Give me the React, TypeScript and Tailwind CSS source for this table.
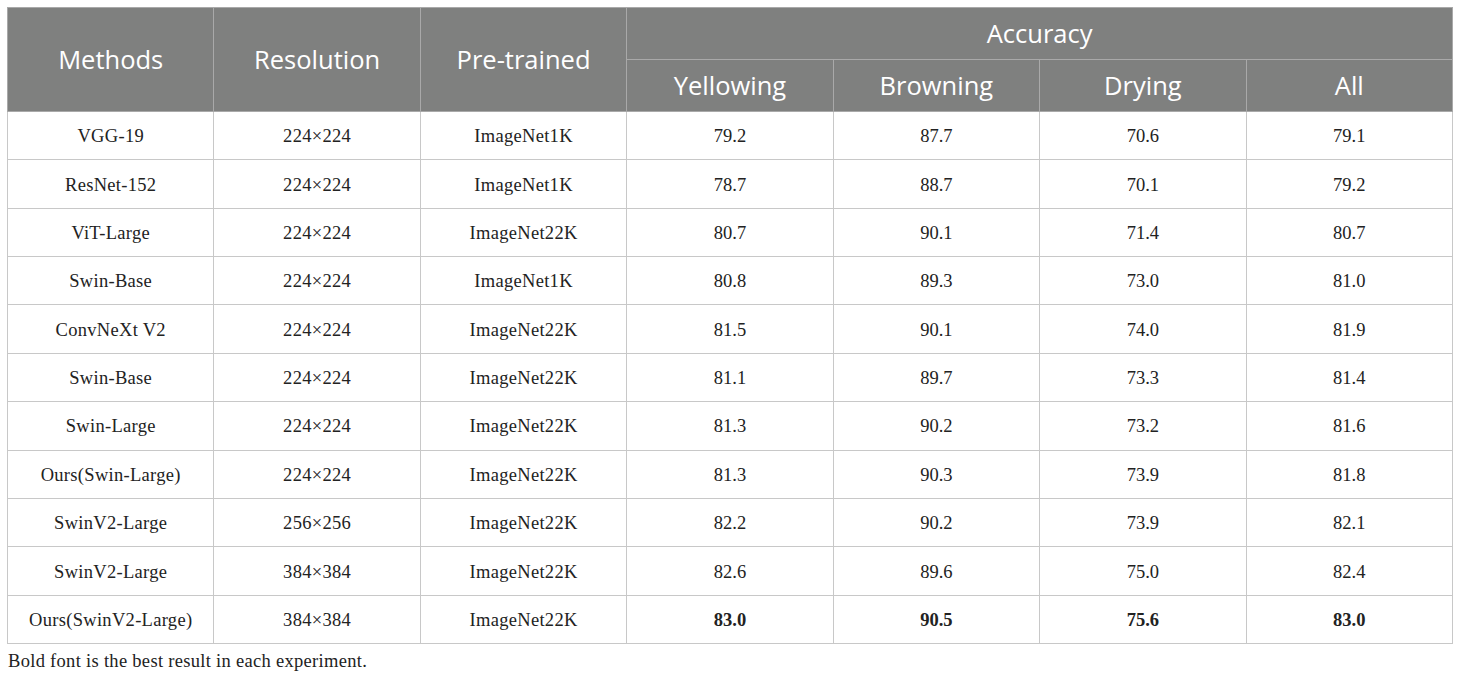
import React from "react";

const rows: [string, string, string, string, string, string, string, boolean?][] = [
  ["VGG-19", "224×224", "ImageNet1K", "79.2", "87.7", "70.6", "79.1"],
  ["ResNet-152", "224×224", "ImageNet1K", "78.7", "88.7", "70.1", "79.2"],
  ["ViT-Large", "224×224", "ImageNet22K", "80.7", "90.1", "71.4", "80.7"],
  ["Swin-Base", "224×224", "ImageNet1K", "80.8", "89.3", "73.0", "81.0"],
  ["ConvNeXt V2", "224×224", "ImageNet22K", "81.5", "90.1", "74.0", "81.9"],
  ["Swin-Base", "224×224", "ImageNet22K", "81.1", "89.7", "73.3", "81.4"],
  ["Swin-Large", "224×224", "ImageNet22K", "81.3", "90.2", "73.2", "81.6"],
  ["Ours(Swin-Large)", "224×224", "ImageNet22K", "81.3", "90.3", "73.9", "81.8"],
  ["SwinV2-Large", "256×256", "ImageNet22K", "82.2", "90.2", "73.9", "82.1"],
  ["SwinV2-Large", "384×384", "ImageNet22K", "82.6", "89.6", "75.0", "82.4"],
  ["Ours(SwinV2-Large)", "384×384", "ImageNet22K", "83.0", "90.5", "75.6", "83.0", true],
];

const th =
  "border border-[#a9a9a9] text-white font-normal text-center align-middle text-[25.5px] [font-family:'Open_Sans',sans-serif]";
const td =
  "border border-[#c8c8c8] text-center align-middle pt-[3px] text-[18.5px] text-[#222] [font-family:'Liberation_Serif',serif]";

export default function App() {
  return (
    <div className="w-[1460px] h-[680px] bg-white pt-[7px] pl-[7px]">
      <table className="border-collapse w-[1446px] table-fixed">
        <thead className="bg-[#7f807f]">
          <tr className="h-[52px]">
            <th rowSpan={2} className={th}>Methods</th>
            <th rowSpan={2} className={th}>Resolution</th>
            <th rowSpan={2} className={th}>Pre-trained</th>
            <th colSpan={4} className={th}>Accuracy</th>
          </tr>
          <tr className="h-[52px]">
            <th className={th}>Yellowing</th>
            <th className={th}>Browning</th>
            <th className={th}>Drying</th>
            <th className={th}>All</th>
          </tr>
        </thead>
        <tbody>
          {rows.map((r, i) => (
            <tr key={i} className="h-[48.36px]">
              {r.slice(0, 7).map((c, j) => (
                <td
                  key={j}
                  className={
                    td +
                    (j < 3 ? " tracking-[0.3px]" : "") +
                    (r[7] && j >= 3 ? " font-bold" : "")
                  }
                >
                  {c as string}
                </td>
              ))}
            </tr>
          ))}
        </tbody>
      </table>
      <div className="mt-[4px] pl-[1px] text-[18.5px] tracking-[0.3px] text-[#222] [font-family:'Liberation_Serif',serif]">
        Bold font is the best result in each experiment.
      </div>
    </div>
  );
}
